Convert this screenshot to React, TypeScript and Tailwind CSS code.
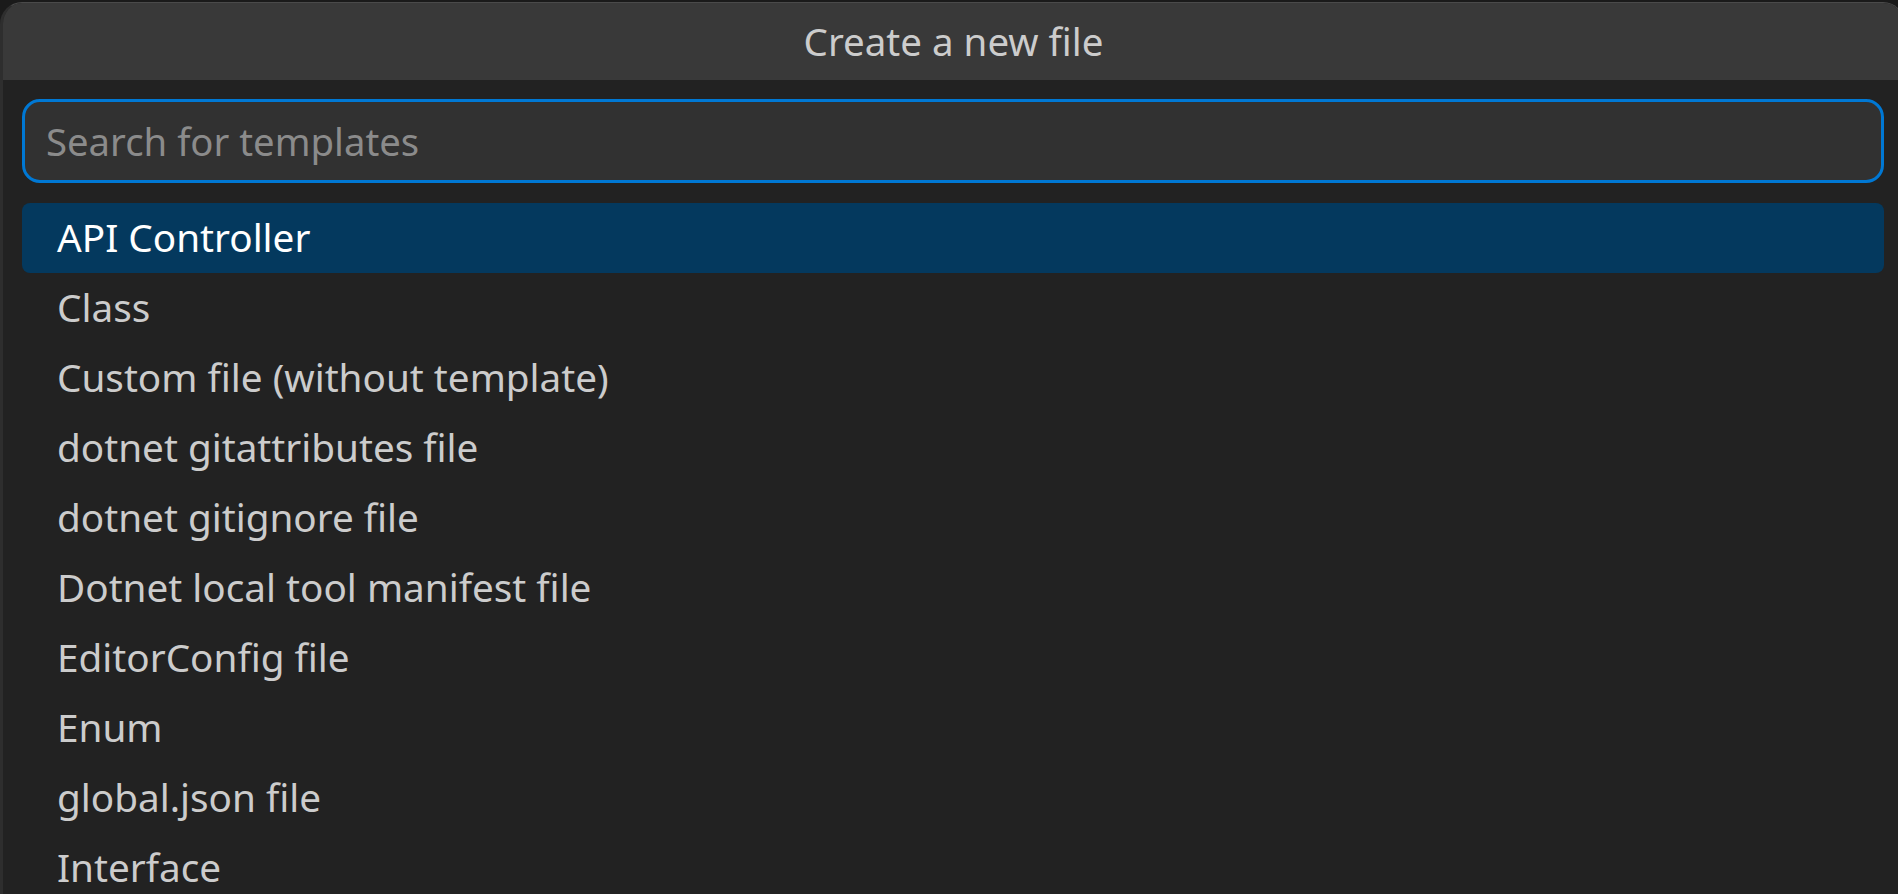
import React from "react";

const templates = [
  "API Controller",
  "Class",
  "Custom file (without template)",
  "dotnet gitattributes file",
  "dotnet gitignore file",
  "Dotnet local tool manifest file",
  "EditorConfig file",
  "Enum",
  "global.json file",
  "Interface",
];

export default function App() {
  return (
    <div
      className="h-[894px] w-full overflow-hidden bg-[#1a1a1a] pt-[2px]"
      style={{ fontFamily: '"Noto Sans", "Open Sans", sans-serif' }}
    >
      <div className="flex h-[900px] w-[1905px] flex-col overflow-hidden rounded-t-[22px] border-l-[3px] border-t border-r border-l-[#2e2e2e] border-t-[#4a4a4a] border-r-[#4a4a4a] bg-[#222222]">
        {/* dialog title */}
        <div className="flex h-[77px] shrink-0 items-center justify-center bg-[#393939] text-[38.5px] leading-none text-[#cccccc]">
          Create a new file
        </div>

        <div className="flex flex-col pl-[19px] pr-[20px] pt-[19px]">
          {/* search box */}
          <div className="flex h-[84px] items-center rounded-[18px] border-[3px] border-[#0078d4] bg-[#313131] pl-[21px]">
            <input
              className="w-full bg-transparent text-[38.3px] leading-none text-[#cccccc] outline-none placeholder:text-[#8b8b8b]"
              placeholder="Search for templates"
            />
          </div>

          {/* template list */}
          <div className="mt-[20px] flex flex-col">
            {templates.map((name, i) => (
              <div
                key={name}
                className={
                  i === 0
                    ? "flex h-[70px] shrink-0 items-center rounded-[8px] bg-[#04395e] pb-[1px] pl-[35px] text-[38.7px] leading-none text-white"
                    : "flex h-[70px] shrink-0 items-center pb-[1px] pl-[35px] text-[38.7px] leading-none text-[#cccccc]"
                }
              >
                {name}
              </div>
            ))}
          </div>
        </div>
      </div>
    </div>
  );
}
